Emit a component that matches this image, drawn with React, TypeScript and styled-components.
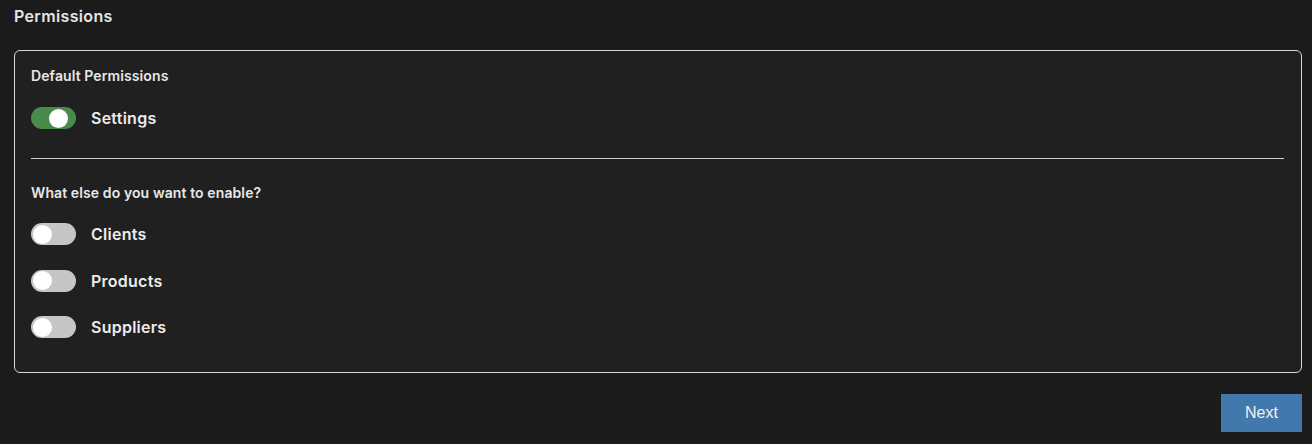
import React, { useState } from "react";
import styled, { createGlobalStyle } from "styled-components";

const Global = createGlobalStyle`
  html, body { margin: 0; padding: 0; background: #1b1b1b; }
  body { font-family: Inter, "Noto Sans", sans-serif; color: #ececec; }
`;

const Page = styled.div`
  padding: 6px 10px 12px 14px;
  display: flex;
  flex-direction: column;
`;

const Title = styled.h1`
  margin: 0;
  font-size: 16px;
  line-height: 20px;
  font-weight: 600;
  letter-spacing: 0.35px;
  color: #e6e6e6;
`;

const Card = styled.section`
  margin-top: 24px;
  border: 1px solid #d6d6d6;
  border-radius: 6px;
  background: #202020;
  padding: 17px 17px 34px 16px;
  display: flex;
  flex-direction: column;
`;

const SectionTitle = styled.h2<{ $top: number }>`
  margin: ${(p) => p.$top}px 0 0;
  font-size: 14px;
  line-height: 16px;
  font-weight: 600;
  letter-spacing: 0.1px;
  color: #e8e8e8;
`;

const Divider = styled.hr`
  margin: 29px 0 0;
  border: none;
  border-top: 1px solid #cfcfcf;
  height: 0;
`;

const List = styled.div<{ $top: number }>`
  margin-top: ${(p) => p.$top}px;
  display: flex;
  flex-direction: column;
  gap: 24.5px;
`;

const Row = styled.label`
  display: flex;
  align-items: center;
  gap: 15px;
  height: 22px;
  cursor: pointer;
`;

const Track = styled.span<{ $on: boolean }>`
  position: relative;
  width: 45px;
  height: 22px;
  border-radius: 11px;
  background: ${(p) => (p.$on ? "#4a8b4b" : "#c6c6c6")};
  flex: none;
`;

const Knob = styled.span<{ $on: boolean }>`
  position: absolute;
  top: 2px;
  left: 2px;
  width: 19px;
  height: 19px;
  margin-top: -0.5px;
  border-radius: 50%;
  background: #ffffff;
  transform: translateX(${(p) => (p.$on ? "16px" : "0")});
  transition: transform 0.15s;
`;

const Label = styled.span`
  font-size: 16px;
  line-height: 20px;
  font-weight: 600;
  letter-spacing: 0.25px;
  color: #ececec;
`;

const Footer = styled.div`
  margin-top: 21px;
  display: flex;
  justify-content: flex-end;
`;

const Button = styled.button`
  width: 81px;
  height: 38px;
  border: none;
  background: #4279ad;
  color: #f2f2f2;
  font-family: "Liberation Sans", Arial, sans-serif;
  font-size: 16px;
  cursor: pointer;
`;

function Toggle({ label, on, onChange }: { label: string; on: boolean; onChange: () => void }) {
  return (
    <Row onClick={onChange}>
      <Track $on={on}>
        <Knob $on={on} />
      </Track>
      <Label>{label}</Label>
    </Row>
  );
}

export default function App() {
  const [state, setState] = useState<Record<string, boolean>>({
    Settings: true,
    Clients: false,
    Products: false,
    Suppliers: false,
  });
  const flip = (k: string) => setState((s) => ({ ...s, [k]: !s[k] }));

  return (
    <>
      <Global />
      <Page>
        <Title>Permissions</Title>
        <Card>
          <SectionTitle $top={0}>Default Permissions</SectionTitle>
          <List $top={23}>
            <Toggle label="Settings" on={state.Settings} onChange={() => flip("Settings")} />
          </List>
          <Divider />
          <SectionTitle $top={26}>What else do you want to enable?</SectionTitle>
          <List $top={22}>
            {["Clients", "Products", "Suppliers"].map((k) => (
              <Toggle key={k} label={k} on={state[k]} onChange={() => flip(k)} />
            ))}
          </List>
        </Card>
        <Footer>
          <Button>Next</Button>
        </Footer>
      </Page>
    </>
  );
}
